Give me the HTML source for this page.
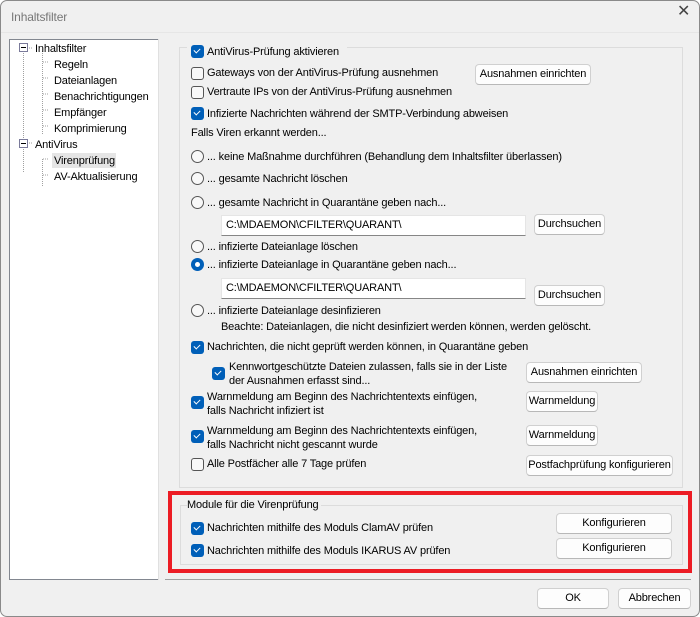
<!DOCTYPE html>
<html><head><meta charset="utf-8"><style>
*{box-sizing:border-box;margin:0;padding:0}
body{width:700px;height:617px;background:#fff;font-family:"Liberation Sans",sans-serif;font-size:11px;letter-spacing:-0.15px;color:#000;overflow:hidden;position:relative}
.win{position:absolute;left:0;top:0;width:700px;height:617px;background:#f0f0f0;border:1px solid #8a8a8a;border-radius:7px}
.t{position:absolute;white-space:nowrap;line-height:14px}
.cb{position:absolute;width:13px;height:13px;border-radius:3px;background:#005fb8}
.cb::after{content:"";position:absolute;left:3px;top:3px;width:5px;height:3px;border-left:1.3px solid #fff;border-bottom:1.3px solid #fff;transform:rotate(-45deg)}
.ub{position:absolute;width:13px;height:13px;border-radius:3px;border:1px solid #555;background:#f8f8f8}
.rd{position:absolute;width:13px;height:13px;border-radius:50%;border:1px solid #555;background:#f8f8f8}
.rs{position:absolute;width:13px;height:13px;border-radius:50%;background:#005fb8}
.rs::after{content:"";position:absolute;left:4px;top:4px;width:5px;height:5px;border-radius:50%;background:#fff}
.btn{position:absolute;background:#fdfdfd;border:1px solid #d0d0d0;border-bottom-color:#b8b8b8;border-radius:4px;text-align:center;line-height:19px;white-space:nowrap;overflow:hidden}
.inp{position:absolute;background:#fff;border:1px solid #e5e5e5;border-bottom:1px solid #868686;padding-left:4px;line-height:19px;white-space:nowrap}
</style></head><body><div class="win">
<div class="t" style="left:10px;top:9px;color:#777;font-size:12px">Inhaltsfilter</div>
<div class="t" style="left:676px;top:4px;font-size:16px;color:#444">✕</div>
<div style="position:absolute;left:0;top:31px;width:698px;height:1px;background:#e6e6e6"></div>
<div style="position:absolute;left:8px;top:38px;width:150px;height:541px;background:#fff;border:1px solid #828790"></div>
<svg style="position:absolute;left:8px;top:38px" width="150" height="150">
<g stroke="#a0a0a0" stroke-dasharray="1,1" fill="none">
<path d="M14.5 14v90M14.5 110v24M33.5 12v84M33.5 120v28M34 23h6M34 39h6M34 55h6M34 71h6M34 87h6M34 120h6M34 136h6M20 9h4M20 104h4"/>
</g>
<rect x="10.5" y="4.5" width="8" height="8" fill="#fff" stroke="#7a7a9a"/><path d="M12 8.5h5" stroke="#000"/>
<rect x="10.5" y="100.5" width="8" height="8" fill="#fff" stroke="#7a7a9a"/><path d="M12 104.5h5" stroke="#000"/>
</svg>
<div class="t" style="left:34px;top:41px">Inhaltsfilter</div>
<div class="t" style="left:53px;top:57px">Regeln</div>
<div class="t" style="left:53px;top:73px">Dateianlagen</div>
<div class="t" style="left:53px;top:89px">Benachrichtigungen</div>
<div class="t" style="left:53px;top:105px">Empfänger</div>
<div class="t" style="left:53px;top:121px">Komprimierung</div>
<div class="t" style="left:34px;top:137px">AntiVirus</div>
<div style="position:absolute;left:51px;top:152px;width:64px;height:15px;background:#e5e5e5"></div>
<div class="t" style="left:53px;top:153px">Virenprüfung</div>
<div class="t" style="left:53px;top:169px">AV-Aktualisierung</div>
<div style="position:absolute;left:157px;top:38px;width:1px;height:541px;background:#e0e0e0"></div>
<div style="position:absolute;left:178px;top:46px;width:504px;height:441px;border:1px solid #dcdcdc"></div>
<div style="position:absolute;left:186px;top:42px;width:160px;height:10px;background:#f0f0f0"></div>
<div class="cb" style="left:190px;top:44px"></div><div class="t" style="left:206px;top:44px">AntiVirus-Prüfung aktivieren</div>
<div class="ub" style="left:190px;top:66px"></div><div class="t" style="left:206px;top:65px">Gateways von der AntiVirus-Prüfung ausnehmen</div>
<div class="btn" style="left:474px;top:63px;width:116px;height:21px">Ausnahmen einrichten</div>
<div class="ub" style="left:190px;top:85px"></div><div class="t" style="left:206px;top:84px">Vertraute IPs von der AntiVirus-Prüfung ausnehmen</div>
<div class="cb" style="left:190px;top:106px"></div><div class="t" style="left:206px;top:106px">Infizierte Nachrichten während der SMTP-Verbindung abweisen</div>
<div class="t" style="left:190px;top:125px">Falls Viren erkannt werden...</div>
<div class="rd" style="left:190px;top:149px"></div><div class="t" style="left:206px;top:149px">... keine Maßnahme durchführen (Behandlung dem Inhaltsfilter überlassen)</div>
<div class="rd" style="left:190px;top:171px"></div><div class="t" style="left:206px;top:171px">... gesamte Nachricht löschen</div>
<div class="rd" style="left:190px;top:195px"></div><div class="t" style="left:206px;top:195px">... gesamte Nachricht in Quarantäne geben nach...</div>
<div class="inp" style="left:220px;top:214px;width:305px;height:21px">C:\MDAEMON\CFILTER\QUARANT\</div>
<div class="btn" style="left:533px;top:213px;width:71px;height:21px">Durchsuchen</div>
<div class="rd" style="left:190px;top:239px"></div><div class="t" style="left:206px;top:239px">... infizierte Dateianlage löschen</div>
<div class="rs" style="left:190px;top:257px"></div><div class="t" style="left:206px;top:257px">... infizierte Dateianlage in Quarantäne geben nach...</div>
<div class="inp" style="left:220px;top:277px;width:305px;height:21px">C:\MDAEMON\CFILTER\QUARANT\</div>
<div class="btn" style="left:533px;top:284px;width:71px;height:21px">Durchsuchen</div>
<div class="rd" style="left:190px;top:303px"></div><div class="t" style="left:206px;top:303px">... infizierte Dateianlage desinfizieren</div>
<div class="t" style="left:220px;top:319px">Beachte: Dateianlagen, die nicht desinfiziert werden können, werden gelöscht.</div>
<div class="cb" style="left:190px;top:340px"></div><div class="t" style="left:206px;top:339px">Nachrichten, die nicht geprüft werden können, in Quarantäne geben</div>
<div class="cb" style="left:211px;top:366px"></div><div class="t" style="left:228px;top:359px">Kennwortgeschützte Dateien zulassen, falls sie in der Liste<br>der Ausnahmen erfasst sind...</div>
<div class="btn" style="left:525px;top:361px;width:116px;height:21px">Ausnahmen einrichten</div>
<div class="cb" style="left:190px;top:395px"></div><div class="t" style="left:206px;top:389px">Warnmeldung am Beginn des Nachrichtentexts einfügen,<br>falls Nachricht infiziert ist</div>
<div class="btn" style="left:525px;top:390px;width:72px;height:21px">Warnmeldung</div>
<div class="cb" style="left:190px;top:429px"></div><div class="t" style="left:206px;top:423px">Warnmeldung am Beginn des Nachrichtentexts einfügen,<br>falls Nachricht nicht gescannt wurde</div>
<div class="btn" style="left:525px;top:424px;width:72px;height:21px">Warnmeldung</div>
<div class="ub" style="left:190px;top:457px"></div><div class="t" style="left:206px;top:456px">Alle Postfächer alle 7 Tage prüfen</div>
<div class="btn" style="left:525px;top:454px;width:147px;height:21px">Postfachprüfung konfigurieren</div>
<div style="position:absolute;left:179px;top:504px;width:503px;height:60px;border:1px solid #dcdcdc"></div>
<div class="t" style="left:186px;top:497px;background:#f0f0f0;padding-right:2px">Module für die Virenprüfung</div>
<div class="cb" style="left:190px;top:521px"></div><div class="t" style="left:206px;top:520px">Nachrichten mithilfe des Moduls ClamAV prüfen</div>
<div class="cb" style="left:190px;top:543px"></div><div class="t" style="left:206px;top:543px">Nachrichten mithilfe des Moduls IKARUS AV prüfen</div>
<div class="btn" style="left:555px;top:512px;width:116px;height:21px">Konfigurieren</div>
<div class="btn" style="left:555px;top:537px;width:116px;height:21px">Konfigurieren</div>
<div style="position:absolute;left:167px;top:490px;width:524px;height:82px;border:4px solid #ec1c24"></div>
<div style="position:absolute;left:164px;top:578px;width:526px;height:1px;background:#a0a0a0"></div>
<div class="btn" style="left:536px;top:587px;width:72px;height:21px">OK</div>
<div class="btn" style="left:617px;top:587px;width:73px;height:21px">Abbrechen</div>
</div></body></html>
